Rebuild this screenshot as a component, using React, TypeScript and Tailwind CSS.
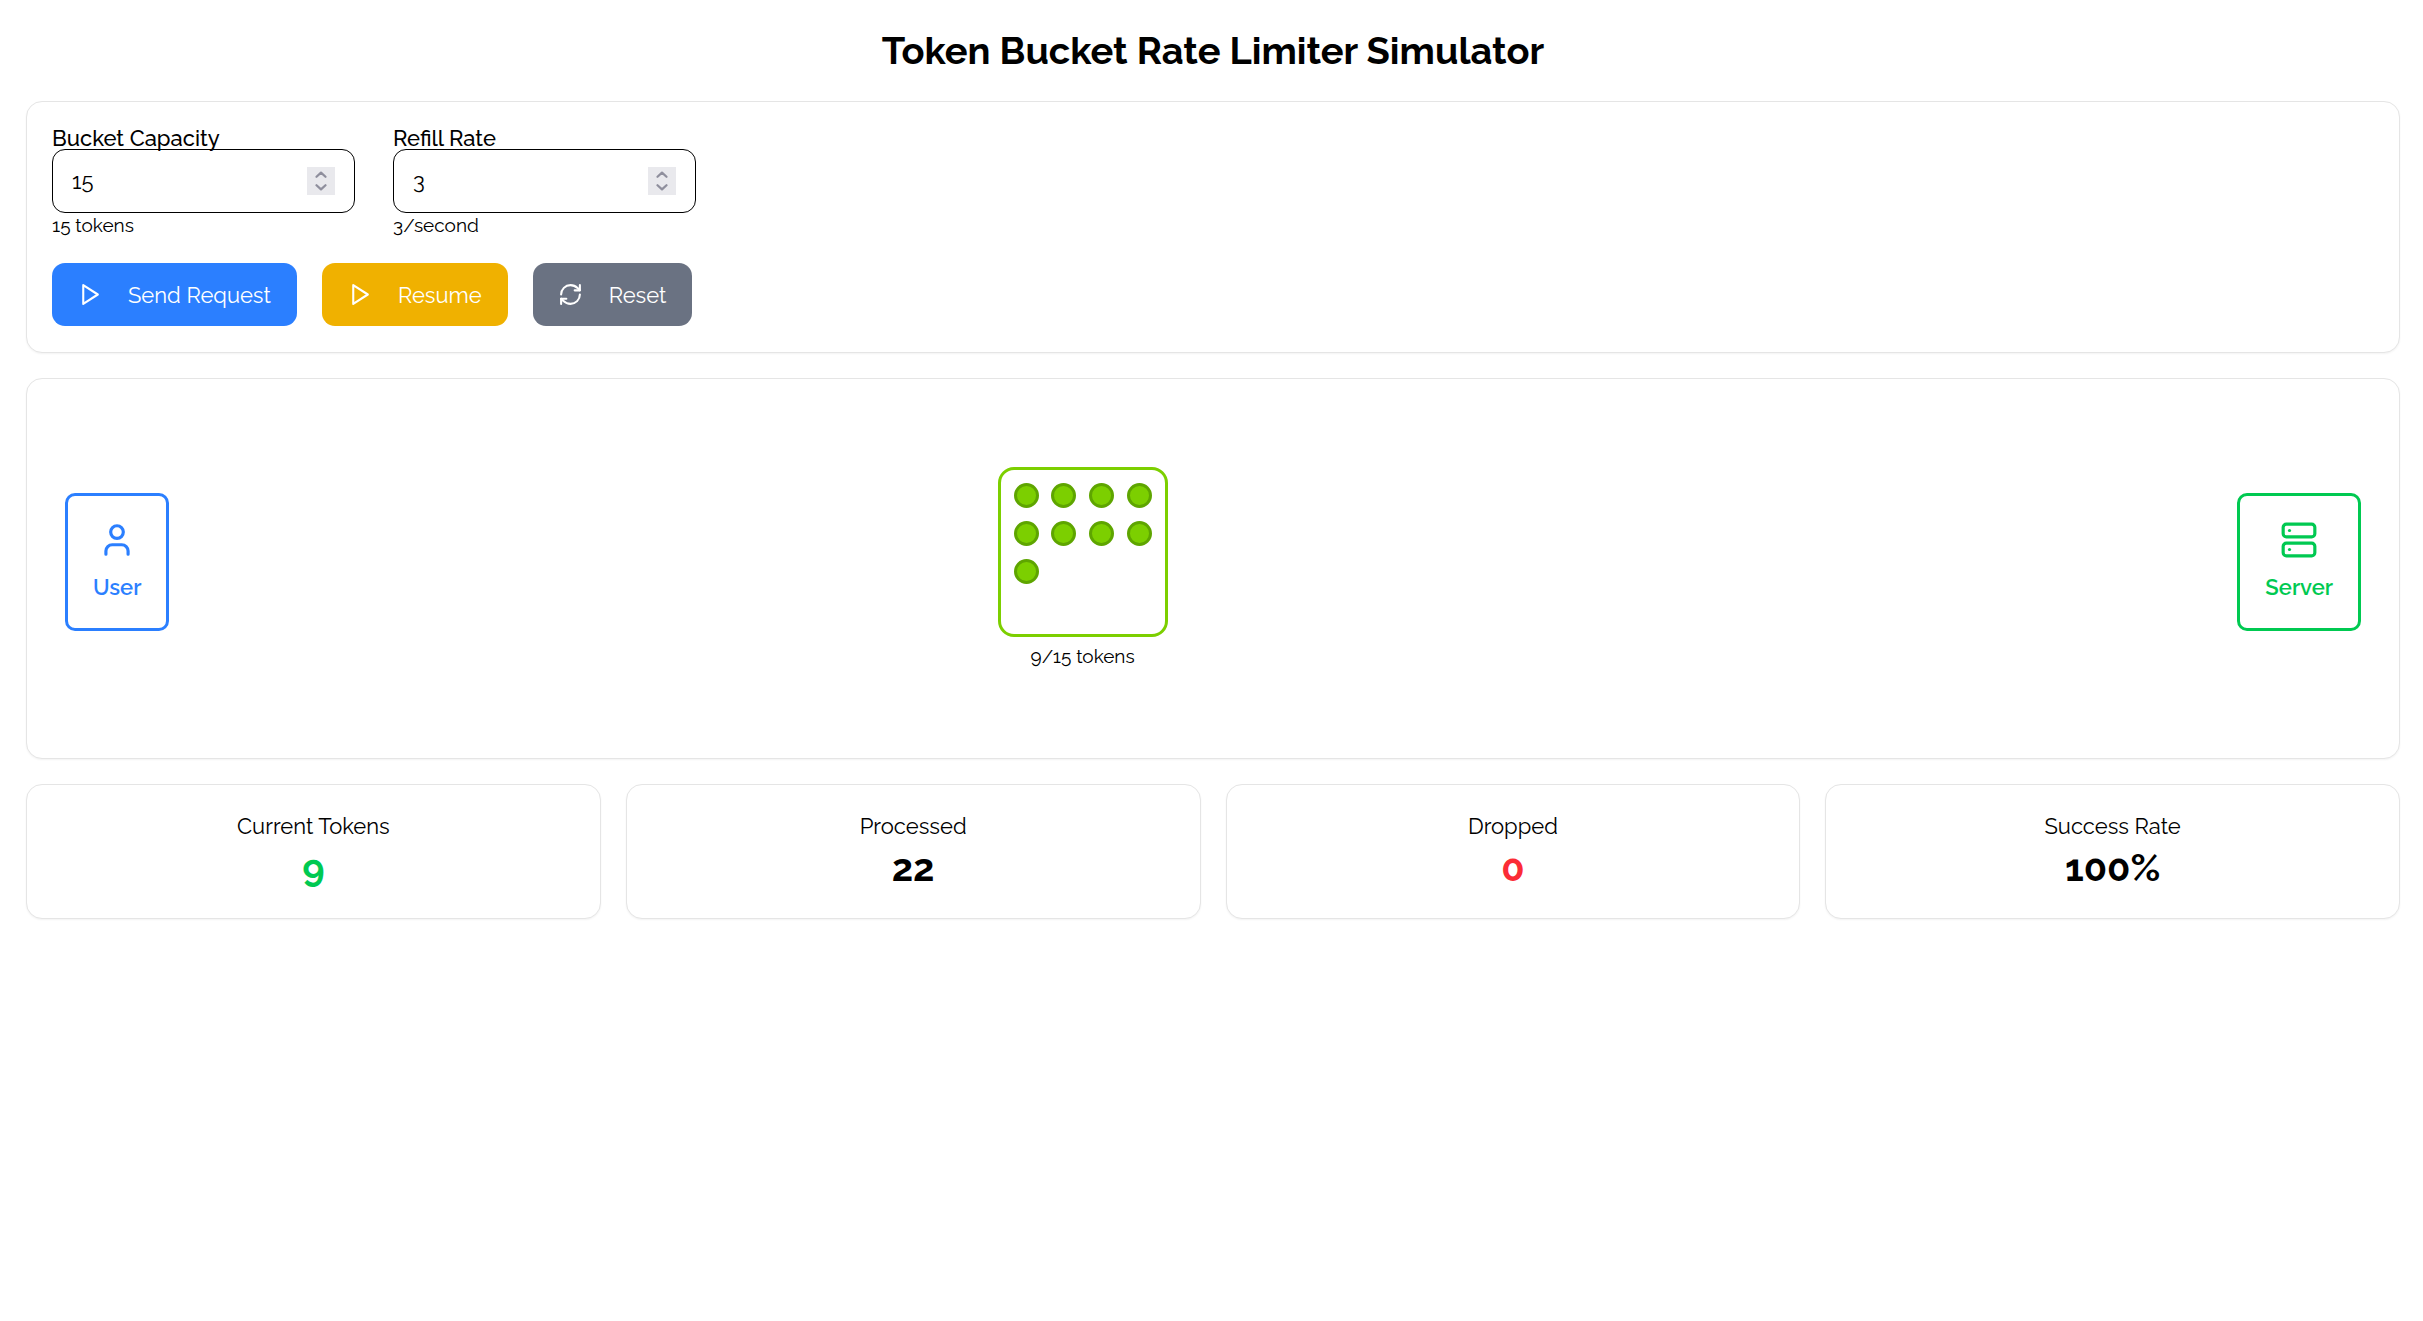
import { useState } from "react";
import type { ReactNode } from "react";
import { RefreshCw, User, Server } from "lucide-react";

const card = "rounded-2xl border border-neutral-200 bg-white shadow-xs";

function PlayIcon() {
  return (
    <svg
      className="size-[25px]"
      viewBox="0 0 24 24"
      fill="none"
      stroke="currentColor"
      strokeWidth="2"
      strokeLinecap="round"
      strokeLinejoin="round"
      aria-hidden="true"
    >
      <polygon points="6 3 20 12 6 21 6 3" />
    </svg>
  );
}

function Chevron({ down = false }: { down?: boolean }) {
  return (
    <svg
      className="h-[7px] w-[12px]"
      viewBox="0 0 12 7"
      fill="none"
      stroke="currentColor"
      strokeWidth="2.2"
      strokeLinecap="round"
      strokeLinejoin="round"
      aria-hidden="true"
    >
      <path d={down ? "M1.5 1.2 6 5.4 10.5 1.2" : "M1.5 5.8 6 1.6 10.5 5.8"} />
    </svg>
  );
}

function NumberField({
  id,
  label,
  value,
  unit,
  onChange,
}: {
  id: string;
  label: string;
  value: number;
  unit: string;
  onChange: (value: number) => void;
}) {
  return (
    <div className="flex w-[303px] flex-col">
      <label htmlFor={id} className="text-[22px] leading-[22px] font-medium">
        {label}
      </label>
      <div className="flex h-16 items-center rounded-[13px] border border-black px-[19px]">
        <input
          id={id}
          type="number"
          min={1}
          value={value}
          onChange={(e) => onChange(Number(e.target.value))}
          className="w-full min-w-0 flex-1 bg-transparent text-[22px] outline-none [appearance:textfield] [&::-webkit-inner-spin-button]:appearance-none"
        />
        <div className="flex h-7 w-7 flex-col gap-[5px] bg-[#e9e9ed] py-1 text-[#8f8f9d]">
          <button
            type="button"
            aria-label={`Increase ${label}`}
            className="flex flex-1 items-center justify-center"
            onClick={() => onChange(value + 1)}
          >
            <Chevron />
          </button>
          <button
            type="button"
            aria-label={`Decrease ${label}`}
            className="flex flex-1 items-center justify-center"
            onClick={() => onChange(Math.max(1, value - 1))}
          >
            <Chevron down />
          </button>
        </div>
      </div>
      <span className="text-[19px] leading-[25px]">
        {value}
        {unit}
      </span>
    </div>
  );
}

function ActionButton({ color, icon, children }: { color: string; icon: ReactNode; children: ReactNode }) {
  return (
    <button
      type="button"
      className={`flex h-[63px] items-center gap-[26px] rounded-[13px] pr-[26px] pl-[25px] text-[22px] leading-8 text-white ${color}`}
    >
      {icon}
      {children}
    </button>
  );
}

function Endpoint({ color, icon, label }: { color: string; icon: ReactNode; label: string }) {
  return (
    <div className={`mt-[26px] flex flex-col items-center gap-3 rounded-[10px] border-3 p-[25px] ${color}`}>
      {icon}
      <span className="text-[22px] leading-8 font-semibold">{label}</span>
    </div>
  );
}

export default function App() {
  const [capacity, setCapacity] = useState(15);
  const [rate, setRate] = useState(3);
  const tokens = 9;

  const stats = [
    { label: "Current Tokens", value: "9", color: "text-green-500" },
    { label: "Processed", value: "22", color: "text-black" },
    { label: "Dropped", value: "0", color: "text-red-500" },
    { label: "Success Rate", value: "100%", color: "text-black" },
  ];

  return (
    <main className="flex min-h-screen flex-col gap-[25px] bg-white pt-[25px] pr-[23px] pb-[25px] pl-[26px] font-[Raleway,sans-serif] text-black">
      <h1 className="text-center text-[38px] leading-[51px] font-bold">Token Bucket Rate Limiter Simulator</h1>

      <section className={`flex flex-col gap-[25px] px-[25px] pt-[25px] pb-[26px] ${card}`}>
        <div className="flex flex-wrap gap-[38px]">
          <NumberField id="capacity" label="Bucket Capacity" value={capacity} unit=" tokens" onChange={setCapacity} />
          <NumberField id="rate" label="Refill Rate" value={rate} unit="/second" onChange={setRate} />
        </div>
        <div className="flex flex-wrap gap-[25px]">
          <ActionButton color="bg-blue-500" icon={<PlayIcon />}>
            Send Request
          </ActionButton>
          <ActionButton color="bg-yellow-500" icon={<PlayIcon />}>
            Resume
          </ActionButton>
          <ActionButton color="bg-gray-500" icon={<RefreshCw className="size-[25px]" />}>
            Reset
          </ActionButton>
        </div>
      </section>

      <section className={`flex min-h-[381px] items-start px-[38px] pt-[88px] ${card}`}>
        <Endpoint color="border-blue-500 text-blue-500" icon={<User className="size-[38px]" />} label="User" />
        <div className="grow-24" />
        <div className="flex flex-col items-center gap-[6px]">
          <div className="size-[170px] rounded-2xl border-3 border-lime-500 p-[13px]">
            <div className="grid grid-cols-[repeat(4,25px)] justify-between gap-y-[13px]">
              {Array.from({ length: tokens }, (_, i) => (
                <div key={i} className="size-[25px] rounded-full border-3 border-lime-600 bg-lime-500" />
              ))}
            </div>
          </div>
          <span className="text-[19px] leading-[27px]">
            {tokens}/{capacity} tokens
          </span>
        </div>
        <div className="grow-31" />
        <Endpoint color="border-green-500 text-green-500" icon={<Server className="size-[38px]" />} label="Server" />
      </section>

      <section className="grid grid-cols-4 gap-[25px]">
        {stats.map((s) => (
          <div key={s.label} className={`p-[25px] text-center ${card}`}>
            <div className="text-[22px] leading-[33px]">{s.label}</div>
            <div className={`text-[38px] leading-[50px] font-bold ${s.color}`}>{s.value}</div>
          </div>
        ))}
      </section>
    </main>
  );
}
